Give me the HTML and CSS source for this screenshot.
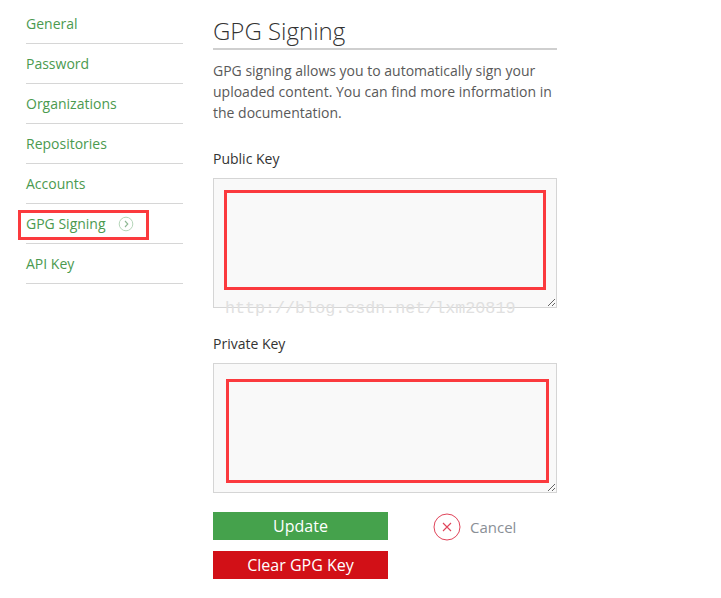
FILE: index.html
```html
<!DOCTYPE html>
<html lang="en">
<head>
    <meta charset="UTF-8">
    <meta name="viewport" content="width=device-width, initial-scale=1.0">
    <title>Settings - GPG Signing</title>
    <link rel="stylesheet" href="styles.css">
</head>
<body>
    <div class="page">
        <nav class="side-nav">
            <ul>
                <li><a href="#">General</a></li>
                <li><a href="#">Password</a></li>
                <li><a href="#">Organizations</a></li>
                <li><a href="#">Repositories</a></li>
                <li><a href="#">Accounts</a></li>
                <li class="current">
                    <a href="#">GPG Signing
                        <svg class="chevron" width="16" height="16" viewBox="0 0 16 16"><circle cx="8" cy="8" r="6.8" fill="none" stroke="#b6d6ba" stroke-width="1"/><path d="M7 5 L9.8 8 L7 11" fill="none" stroke="#8fb894" stroke-width="1.1"/></svg>
                    </a>
                    <span class="mark"></span>
                </li>
                <li><a href="#">API Key</a></li>
            </ul>
        </nav>
        <section class="content">
            <h1>GPG Signing</h1>
            <p class="intro">GPG signing allows you to automatically sign your uploaded content. You can find more information in the documentation.</p>
            <form class="gpg-form">
                <label for="public-key">Public Key</label>
                <div class="field">
                    <textarea id="public-key"></textarea>
                    <span class="mark mark-public"></span>
                    <span class="watermark">http://blog.csdn.net/lxm20819</span>
                </div>
                <label for="private-key">Private Key</label>
                <div class="field">
                    <textarea id="private-key"></textarea>
                    <span class="mark mark-private"></span>
                </div>
                <div class="actions">
                    <div class="buttons">
                        <button type="submit" class="btn btn-update">Update</button>
                        <button type="button" class="btn btn-clear">Clear GPG Key</button>
                    </div>
                    <a href="#" class="cancel">
                        <svg width="28" height="28" viewBox="0 0 28 28"><circle cx="14" cy="14" r="13" fill="none" stroke="#e0445a" stroke-width="1"/><path d="M10 10 L18 18 M18 10 L10 18" stroke="#e0445a" stroke-width="1.1"/></svg>
                        Cancel
                    </a>
                </div>
            </form>
        </section>
    </div>
</body>
</html>
```

FILE: styles.css
```css
* { margin: 0; padding: 0; box-sizing: border-box; }
body { font-family: "Open Sans", "Noto Sans", Arial, sans-serif; font-size: 14px; line-height: 21px; color: #333; background: #fff; }
.page { display: flex; gap: 30px; padding: 4px 0 0 26px; }
.side-nav { width: 157px; flex-shrink: 0; }
.side-nav ul { list-style: none; }
.side-nav li { position: relative; height: 40px; border-bottom: 1px solid #d6d6d6; display: flex; align-items: center; }
.side-nav a { color: #4b9a4f; text-decoration: none; display: flex; align-items: center; gap: 12px; }
.chevron { display: block; }
.side-nav li .mark { position: absolute; left: -8px; top: 6px; width: 131px; height: 30px; border: 3px solid #fb3a3e; }
.content { width: 344px; margin-top: -1px; }
.content h1 { font-size: 24px; font-weight: 300; line-height: 30px; color: #333; padding-top: 13px; border-bottom: 2px solid #cfcfcf; height: 47px; }
.intro { color: #595959; font-size: 14px; margin-top: 10px; }
.gpg-form { display: flex; flex-direction: column; margin-top: 25px; }
.gpg-form label { color: #333; line-height: 21px; }
.field { position: relative; margin-top: 9px; margin-bottom: 25px; height: 130px; }
.field textarea { display: block; width: 100%; height: 130px; background: #f9f9f9; border: 1px solid #d5d5d5; resize: vertical; font-family: inherit; }
.field .mark { position: absolute; border: 3px solid #fb3a3e; }
.mark-public { left: 11px; top: 12px; width: 322px; height: 100px; }
.mark-private { left: 13px; top: 16px; width: 323px; height: 104px; }
.watermark { position: absolute; left: 12px; top: 120px; font-family: "Liberation Mono", monospace; font-size: 16.7px; color: #e0e0e0; white-space: nowrap; }
.actions { display: flex; align-items: flex-start; gap: 45px; margin-top: -6px; }
.buttons { display: flex; flex-direction: column; gap: 11px; width: 175px; }
.btn { height: 28px; border: none; color: #fff; font-family: inherit; font-size: 16px; cursor: pointer; }
.btn-update { background: #45a24c; }
.btn-clear { background: #d21017; }
.cancel { display: flex; align-items: center; gap: 9px; color: #8a8f96; font-size: 15px; text-decoration: none; margin-top: 1px; }
.cancel svg { display: block; }
```
